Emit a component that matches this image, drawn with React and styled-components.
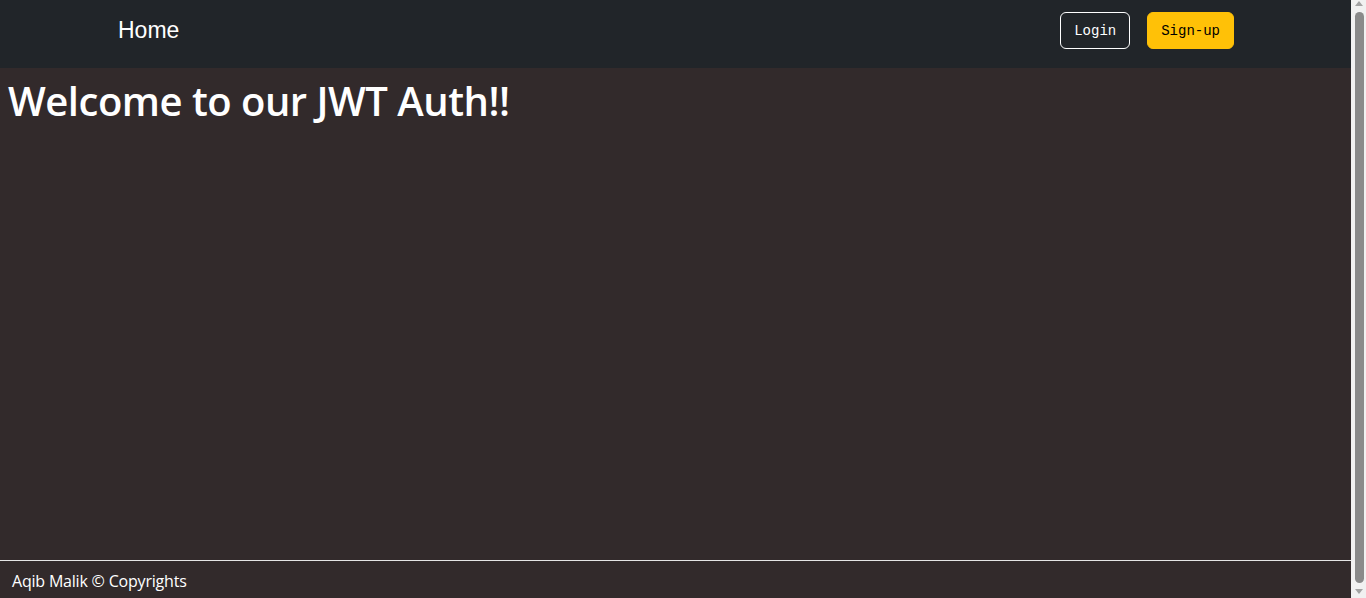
import React from "react";
import styled, { createGlobalStyle } from "styled-components";

const GlobalStyle = createGlobalStyle`
  html, body {
    margin: 0;
    padding: 0;
    background: #322a2b;
    overflow: hidden;
  }
  body {
    font-family: "Open Sans", "Noto Sans", sans-serif;
  }
`;

const Page = styled.div`
  display: flex;
  flex-direction: column;
  min-height: 601px;
  margin-right: 15px;
  background: #322a2b;
`;

const Navbar = styled.nav`
  height: 68px;
  background: #212529;
  display: flex;
  align-items: flex-start;
  padding: 12px 117px 0 118px;
  box-sizing: border-box;
`;

const Brand = styled.a`
  color: #ffffff;
  font-family: "Liberation Sans", Arial, sans-serif;
  font-size: 23px;
  line-height: 37px;
  text-decoration: none;
`;

const Actions = styled.div`
  margin-left: auto;
  display: flex;
  gap: 17px;
`;

const NavButton = styled.button`
  height: 37px;
  padding: 0 13px;
  border-radius: 6px;
  font-family: "Liberation Mono", "DejaVu Sans Mono", monospace;
  font-size: 14px;
  cursor: pointer;
  border: 1px solid ${(p) => (p.$primary ? "#ffc107" : "#ffffff")};
  background: ${(p) => (p.$primary ? "#ffc107" : "transparent")};
  color: ${(p) => (p.$primary ? "#000000" : "#ffffff")};
`;

const Main = styled.main`
  flex: 1;
  padding: 5px 8px;
`;

const Heading = styled.h1`
  margin: 0;
  color: #ffffff;
  font-family: "Open Sans", "Noto Sans", sans-serif;
  font-weight: 600;
  font-size: 40px;
  letter-spacing: -0.5px;
`;

const Footer = styled.footer`
  border-top: 1px solid #e6e6e6;
  height: 40px;
  display: flex;
  align-items: center;
  padding: 0 12px;
  color: #ffffff;
  font-size: 16px;
  letter-spacing: -0.2px;
`;

/* window scrollbar, drawn over the right edge */
const ScrollRail = styled.div`
  position: fixed;
  top: 0;
  right: 0;
  bottom: 0;
  width: 15px;
  background: #f1f1f1;
  display: flex;
  flex-direction: column;
  align-items: center;
  padding: 1px 0 4px;
  box-sizing: border-box;
`;

const Arrow = styled.div`
  width: 0;
  height: 0;
  margin-left: 1px;
  border-left: 4.5px solid transparent;
  border-right: 4.5px solid transparent;
  ${(p) =>
    p.$down
      ? "border-top: 5px solid #a3a3a3;"
      : "border-bottom: 5px solid #a3a3a3;"}
`;

const Thumb = styled.div`
  flex: 1;
  width: 9px;
  margin: 6px 0 6px 1px;
  background: #8a8a8a;
  border-radius: 5px;
`;

export default function App() {
  return (
    <>
      <GlobalStyle />
      <Page>
        <Navbar>
          <Brand href="#">Home</Brand>
          <Actions>
            <NavButton>Login</NavButton>
            <NavButton $primary>Sign-up</NavButton>
          </Actions>
        </Navbar>
        <Main>
          <Heading>Welcome to our JWT Auth!!</Heading>
        </Main>
        <Footer>Aqib Malik © Copyrights</Footer>
      </Page>
      <ScrollRail>
        <Arrow />
        <Thumb />
        <Arrow $down />
      </ScrollRail>
    </>
  );
}
